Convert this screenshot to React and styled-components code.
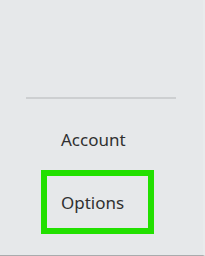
import styled, { createGlobalStyle } from 'styled-components';

const GlobalStyle = createGlobalStyle`
  html, body {
    margin: 0;
    padding: 0;
    background: #e6e8ea;
  }
`;

const items = [
  { label: 'Account', selected: false },
  { label: 'Options', selected: true },
];

const App = () => {
  return (
    <>
      <GlobalStyle />
      <Pane>
        <Divider />
        <Nav>
          {items.map(item => (
            <Item key={item.label} $selected={item.selected}>
              {item.label}
            </Item>
          ))}
        </Nav>
      </Pane>
    </>
  );
};

export default App;

const Pane = styled.div`
  width: 205px;
  height: 256px;
  box-sizing: border-box;
  display: flex;
  flex-direction: column;
  padding-top: 97px;
  background-color: #e6e8ea;
  border-bottom: 1px solid #a9abad;
  border-right: 2px solid #e9ebec;
  font-family: 'Noto Sans', 'Open Sans', sans-serif;
`;

const Divider = styled.div`
  height: 2px;
  width: 150px;
  margin-left: 26px;
  background-color: #cdcfd1;
`;

const Nav = styled.div`
  display: flex;
  flex-direction: column;
  margin-top: 8px;
  margin-left: 41px;
`;

const Item = styled.div`
  box-sizing: border-box;
  width: 113px;
  height: 64px;
  display: flex;
  align-items: center;
  padding-left: ${p => (p.$selected ? '14px' : '20px')};
  border: ${p => (p.$selected ? '6px solid #22e000' : 'none')};
  margin-top: ${p => (p.$selected ? '-1px' : '0')};
  color: #303030;
  font-size: 17px;
  font-weight: 400;
  line-height: 1;
`;
